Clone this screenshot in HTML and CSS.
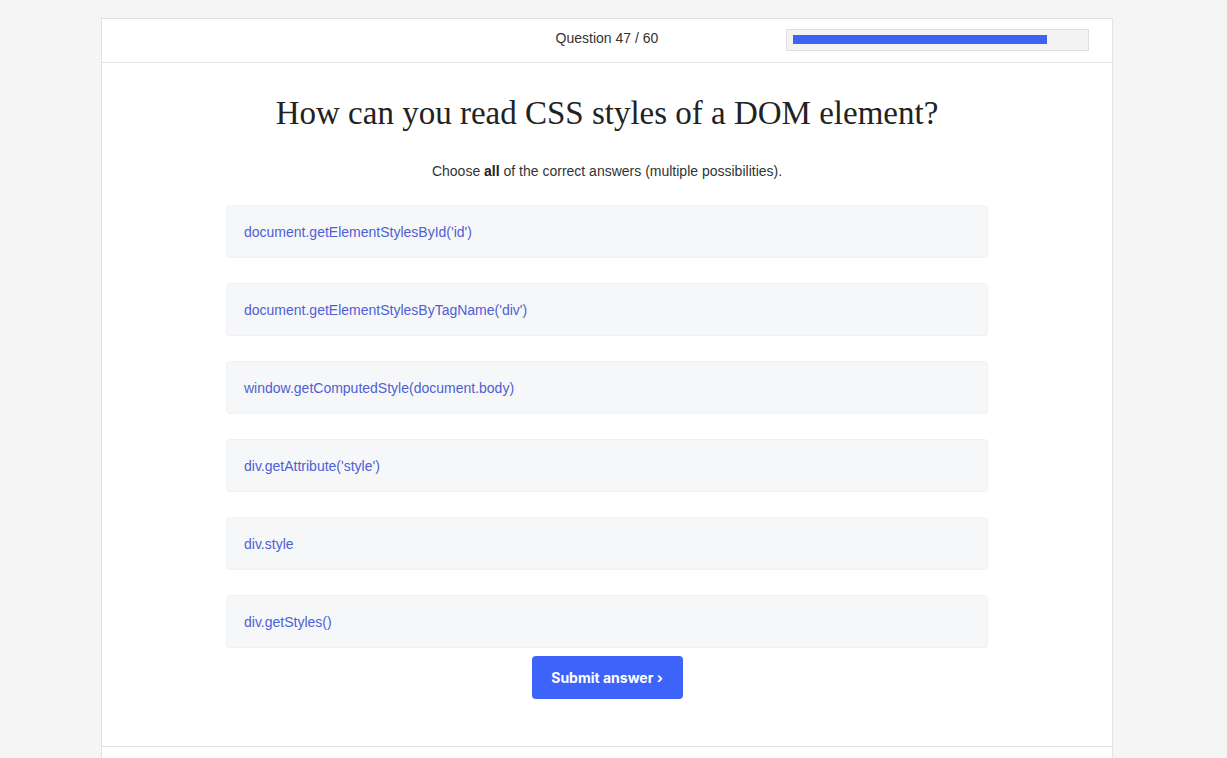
FILE: index.html
```html
<!DOCTYPE html>
<html lang="en">
<head>
<meta charset="utf-8">
<title>Quiz</title>
<link rel="stylesheet" href="styles.css">
</head>
<body>
<div class="card">
  <header class="quiz-header">
    <div class="spacer"></div>
    <div class="counter">Question 47 / 60</div>
    <div class="progress-wrap">
      <div class="progress"><div class="progress-fill" style="width: 88%"></div></div>
    </div>
  </header>
  <main class="quiz-body">
    <h1 class="question">How can you read CSS styles of a DOM element?</h1>
    <p class="hint">Choose <b>all</b> of the correct answers (multiple possibilities).</p>
    <ul class="options">
      <li class="option">document.getElementStylesById('id')</li>
      <li class="option">document.getElementStylesByTagName('div')</li>
      <li class="option">window.getComputedStyle(document.body)</li>
      <li class="option">div.getAttribute('style')</li>
      <li class="option">div.style</li>
      <li class="option">div.getStyles()</li>
    </ul>
    <div class="actions"><button class="submit">Submit answer ›</button></div>
  </main>
  <footer class="quiz-footer"></footer>
</div>
</body>
</html>
```

FILE: styles.css
```css
html, body {
  margin: 0;
  padding: 0;
}
body {
  background: #f5f5f5;
  font-family: "Liberation Sans", Arial, sans-serif;
  color: #333;
  padding-top: 18px;
}
.card {
  width: 1010px;
  margin-left: 101px;
  background: #fff;
  border: 1px solid #e2e2e2;
  border-bottom: none;
}
.quiz-header {
  display: grid;
  grid-template-columns: 1fr 1fr 1fr;
  align-items: center;
  height: 43px;
  border-bottom: 1px solid #e2e2e2;
}
.counter {
  text-align: center;
  font-size: 14px;
  color: #333;
  padding-bottom: 5px;
}
.progress-wrap {
  padding-left: 11px;
  padding-right: 23px;
}
.progress {
  height: 22px;
  box-sizing: border-box;
  background: #f3f3f3;
  border: 1px solid #e0e0e0;
  padding: 5px 6px;
  margin-top: -2px;
}
.progress-fill {
  height: 9px;
  background: #3d63f5;
}
.quiz-body {
  padding: 32px 0 47px;
  display: flex;
  flex-direction: column;
  align-items: center;
}
.question {
  margin: 0;
  font-family: "Liberation Serif", Georgia, serif;
  font-weight: normal;
  font-size: 33px;
  line-height: 36px;
  color: #222;
}
.hint {
  margin: 32px 0 0;
  font-size: 14px;
  line-height: 16px;
  color: #333;
}
.hint b {
  color: #222;
}
.options {
  list-style: none;
  margin: 26px 0 0;
  padding: 0;
  width: 762px;
  display: flex;
  flex-direction: column;
  gap: 25px;
}
.option {
  height: 53px;
  box-sizing: border-box;
  display: flex;
  align-items: center;
  padding: 0 17px;
  background: #f6f7f9;
  border: 1px solid #f0f1f4;
  border-radius: 4px;
  color: #4d5fd6;
  font-size: 14px;
}
.actions {
  margin-top: 8px;
}
.submit {
  width: 151px;
  height: 43px;
  border: none;
  border-radius: 4px;
  background: #3d63fa;
  color: #fff;
  font-family: Inter, "Liberation Sans", sans-serif;
  font-weight: 700;
  font-size: 14px;
  cursor: pointer;
}
.quiz-footer {
  border-top: 1px solid #e2e2e2;
  height: 60px;
}
```
